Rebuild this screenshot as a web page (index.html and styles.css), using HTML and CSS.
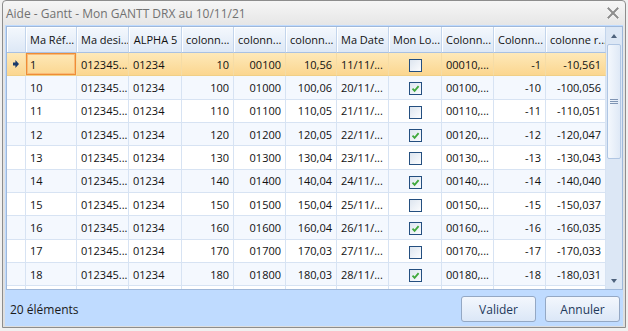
FILE: index.html
```html
<!DOCTYPE html>
<html lang="fr">
<head>
    <meta charset="UTF-8">
    <title>Aide - Gantt</title>
    <link rel="stylesheet" href="styles.css">
</head>
<body>
    <div class="window">
        <div class="titlebar">
            <span class="title">Aide - Gantt - Mon GANTT DRX au 10/11/21</span>
            <svg class="close" width="12" height="12" viewBox="0 0 12 12">
                <path d="M1.5 1.5L10.5 10.5M10.5 1.5L1.5 10.5" stroke="#ffffff" stroke-width="3.6" stroke-linecap="square"/>
                <path d="M1.5 1.5L10.5 10.5M10.5 1.5L1.5 10.5" stroke="#8e8e8e" stroke-width="2.2" stroke-linecap="square"/>
            </svg>
        </div>
        <div class="client">
            <div class="grid">
                <div class="grid-body">
                    <table class="data">
                        <colgroup>
                            <col style="width:19px">
                            <col style="width:51px">
                            <col style="width:52px">
                            <col style="width:53px">
                            <col style="width:52px">
                            <col style="width:52px">
                            <col style="width:51px">
                            <col style="width:52px">
                            <col style="width:53px">
                            <col style="width:52px">
                            <col style="width:52px">
                            <col style="width:60px">
                        </colgroup>
                        <thead>
                            <tr>
                                <th class="ind"></th>
                                <th>Ma Réf...</th>
                                <th>Ma desi...</th>
                                <th class="center">ALPHA 5</th>
                                <th>colonn...</th>
                                <th>colonn...</th>
                                <th>colonn...</th>
                                <th>Ma Date</th>
                                <th>Mon Lo...</th>
                                <th>Colonn...</th>
                                <th>Colonn...</th>
                                <th>colonne r...</th>
                            </tr>
                        </thead>
                        <tbody>
                            <tr class="selected">
                                <td class="ind"><svg width="6" height="8" viewBox="0 0 6 8"><path d="M0 2.6H2.4V0L6 4L2.4 8V5.4H0Z" fill="#1b3a6b"/></svg></td>
                                <td class="focused">1</td><td>012345...</td><td>01234</td>
                                <td class="num">10</td><td class="num">00100</td><td class="num">10,56</td>
                                <td>11/11/...</td><td class="check"><span class="chk"></span></td>
                                <td class="num">00010,...</td><td class="num">-1</td><td class="num">-10,561</td>
                            </tr>
                            <tr>
                                <td class="ind"></td>
                                <td>10</td><td>012345...</td><td>01234</td>
                                <td class="num">100</td><td class="num">01000</td><td class="num">100,06</td>
                                <td>20/11/...</td><td class="check"><span class="chk on"></span></td>
                                <td class="num">00100,...</td><td class="num">-10</td><td class="num">-100,056</td>
                            </tr>
                            <tr>
                                <td class="ind"></td>
                                <td>11</td><td>012345...</td><td>01234</td>
                                <td class="num">110</td><td class="num">01100</td><td class="num">110,05</td>
                                <td>21/11/...</td><td class="check"><span class="chk"></span></td>
                                <td class="num">00110,...</td><td class="num">-11</td><td class="num">-110,051</td>
                            </tr>
                            <tr>
                                <td class="ind"></td>
                                <td>12</td><td>012345...</td><td>01234</td>
                                <td class="num">120</td><td class="num">01200</td><td class="num">120,05</td>
                                <td>22/11/...</td><td class="check"><span class="chk on"></span></td>
                                <td class="num">00120,...</td><td class="num">-12</td><td class="num">-120,047</td>
                            </tr>
                            <tr>
                                <td class="ind"></td>
                                <td>13</td><td>012345...</td><td>01234</td>
                                <td class="num">130</td><td class="num">01300</td><td class="num">130,04</td>
                                <td>23/11/...</td><td class="check"><span class="chk"></span></td>
                                <td class="num">00130,...</td><td class="num">-13</td><td class="num">-130,043</td>
                            </tr>
                            <tr>
                                <td class="ind"></td>
                                <td>14</td><td>012345...</td><td>01234</td>
                                <td class="num">140</td><td class="num">01400</td><td class="num">140,04</td>
                                <td>24/11/...</td><td class="check"><span class="chk on"></span></td>
                                <td class="num">00140,...</td><td class="num">-14</td><td class="num">-140,040</td>
                            </tr>
                            <tr>
                                <td class="ind"></td>
                                <td>15</td><td>012345...</td><td>01234</td>
                                <td class="num">150</td><td class="num">01500</td><td class="num">150,04</td>
                                <td>25/11/...</td><td class="check"><span class="chk"></span></td>
                                <td class="num">00150,...</td><td class="num">-15</td><td class="num">-150,037</td>
                            </tr>
                            <tr>
                                <td class="ind"></td>
                                <td>16</td><td>012345...</td><td>01234</td>
                                <td class="num">160</td><td class="num">01600</td><td class="num">160,04</td>
                                <td>26/11/...</td><td class="check"><span class="chk on"></span></td>
                                <td class="num">00160,...</td><td class="num">-16</td><td class="num">-160,035</td>
                            </tr>
                            <tr>
                                <td class="ind"></td>
                                <td>17</td><td>012345...</td><td>01234</td>
                                <td class="num">170</td><td class="num">01700</td><td class="num">170,03</td>
                                <td>27/11/...</td><td class="check"><span class="chk"></span></td>
                                <td class="num">00170,...</td><td class="num">-17</td><td class="num">-170,033</td>
                            </tr>
                            <tr>
                                <td class="ind"></td>
                                <td>18</td><td>012345...</td><td>01234</td>
                                <td class="num">180</td><td class="num">01800</td><td class="num">180,03</td>
                                <td>28/11/...</td><td class="check"><span class="chk on"></span></td>
                                <td class="num">00180,...</td><td class="num">-18</td><td class="num">-180,031</td>
                            </tr>
                            <tr>
                                <td class="ind"></td>
                                <td></td><td></td><td></td><td></td><td></td><td></td>
                                <td></td><td></td><td></td><td></td><td></td>
                            </tr>
                        </tbody>
                    </table>
                </div>
                <div class="vscroll">
                    <div class="sb-btn"><span class="tri-up"></span></div>
                    <div class="sb-track">
                        <div class="sb-thumb"><span class="grip"></span></div>
                    </div>
                    <div class="sb-btn"><span class="tri-down"></span></div>
                </div>
            </div>
            <div class="footer">
                <span class="count">20 éléments</span>
                <div class="actions">
                    <button>Valider</button>
                    <button>Annuler</button>
                </div>
            </div>
        </div>
    </div>
</body>
</html>
```

FILE: styles.css
```css
* {
    margin: 0;
    padding: 0;
    box-sizing: border-box;
    font-family: 'Open Sans', 'Liberation Sans', sans-serif;
}

body {
    background: #f0f0f0;
    width: 628px;
    height: 331px;
    overflow: hidden;
}

.window {
    width: 624px;
    height: 328px;
    margin-left: 2px;
    border: 1px solid #8d8d8d;
    border-radius: 4px 4px 0 0;
    background: linear-gradient(#f6f6f6, #e6e6e6 24px, #dedede);
    padding: 0 2px 1px;
    display: flex;
    flex-direction: column;
}

.titlebar {
    height: 24px;
    display: flex;
    align-items: center;
    justify-content: space-between;
    padding: 0 4px 0 1px;
}

.title {
    color: #717171;
    font-size: 12px;
}

.client {
    flex: 1;
    background: #bfdbff;
    display: flex;
    flex-direction: column;
}

.grid {
    margin: 1px 0 0 1px;
    height: 264px;
    border: 1px solid #9fb8da;
    background: #ffffff;
    display: flex;
}

.grid-body {
    flex: 1;
    overflow: hidden;
}

.data {
    width: 599px;
    table-layout: fixed;
    border-collapse: separate;
    border-spacing: 0;
    font-size: 11px;
    color: #111111;
}

.data th {
    height: 26px;
    padding: 0 3px 0 4px;
    text-align: left;
    font-weight: normal;
    white-space: nowrap;
    overflow: hidden;
    background: linear-gradient(#f4f8fd, #dde8f6);
    border-right: 1px solid #c3d5ec;
    border-bottom: 1px solid #a9c1e2;
    box-shadow: inset 1px 1px 0 #ffffff;
}

.data th.center {
    text-align: center;
}

.data td {
    height: 23.33px;
    padding: 0 4px;
    white-space: nowrap;
    overflow: hidden;
    border-right: 1px solid #d7e3f3;
    border-bottom: 1px solid #d7e3f3;
}

.data tbody tr:nth-child(even) td {
    background: #f4f8fe;
}

.data td.num {
    text-align: right;
}

.data td.ind {
    padding: 0;
    text-align: center;
}

.data td.ind svg {
    display: block;
    margin: 0 auto;
}

.data td.check {
    text-align: center;
    padding: 0;
}

.data tr.selected td {
    background: linear-gradient(#fee9b9, #fbd690);
    border-right-color: #f5dca6;
    border-bottom-color: #f0cf87;
}

.data td.focused {
    box-shadow: inset 0 0 0 1px #ef8d35, inset 0 0 0 2px #f9bb78;
}

.chk {
    display: inline-block;
    width: 13px;
    height: 13px;
    vertical-align: middle;
    border: 1px solid #244f80;
    background: linear-gradient(135deg, #dde5ef, #fbfcfe);
}

.chk.on {
    background: url("data:image/svg+xml,%3Csvg xmlns='http://www.w3.org/2000/svg' width='11' height='11'%3E%3Cpath d='M2.5 5.6L4.6 7.8L8.6 3.2' fill='none' stroke='%2340a83c' stroke-width='1.8'/%3E%3C/svg%3E") no-repeat center, linear-gradient(135deg, #dde5ef, #fbfcfe);
}

.vscroll {
    width: 16px;
    display: flex;
    flex-direction: column;
    background: #dce7f5;
}

.sb-btn {
    height: 17px;
    display: flex;
    align-items: center;
    justify-content: center;
}

.tri-up {
    border-left: 3.5px solid transparent;
    border-right: 3.5px solid transparent;
    border-bottom: 4px solid #4e627c;
}

.tri-down {
    border-left: 3.5px solid transparent;
    border-right: 3.5px solid transparent;
    border-top: 4px solid #4e627c;
}

.sb-track {
    flex: 1;
    padding: 0 1px;
}

.sb-thumb {
    height: 115px;
    border: 1px solid #b0c6e3;
    border-radius: 2px;
    background: linear-gradient(90deg, #f4f8fd, #dfe9f6);
    display: flex;
    align-items: center;
    justify-content: center;
}

.grip {
    width: 8px;
    height: 5px;
    border-top: 1px solid #7f95b4;
    border-bottom: 1px solid #7f95b4;
    position: relative;
}

.grip::after {
    content: '';
    display: block;
    margin-top: 1px;
    height: 1px;
    background: #7f95b4;
}

.footer {
    flex: 1;
    display: flex;
    align-items: center;
    justify-content: space-between;
    padding: 2px 3px 0 5px;
}

.count {
    font-size: 12px;
    color: #1a1a1a;
}

.actions {
    display: flex;
    gap: 9px;
}

.actions button {
    width: 75px;
    height: 26px;
    border: 1px solid #94a8c4;
    border-radius: 3px;
    background: linear-gradient(#f3f7fd, #dbe7f7);
    color: #1e395b;
    font-size: 12px;
}
```
